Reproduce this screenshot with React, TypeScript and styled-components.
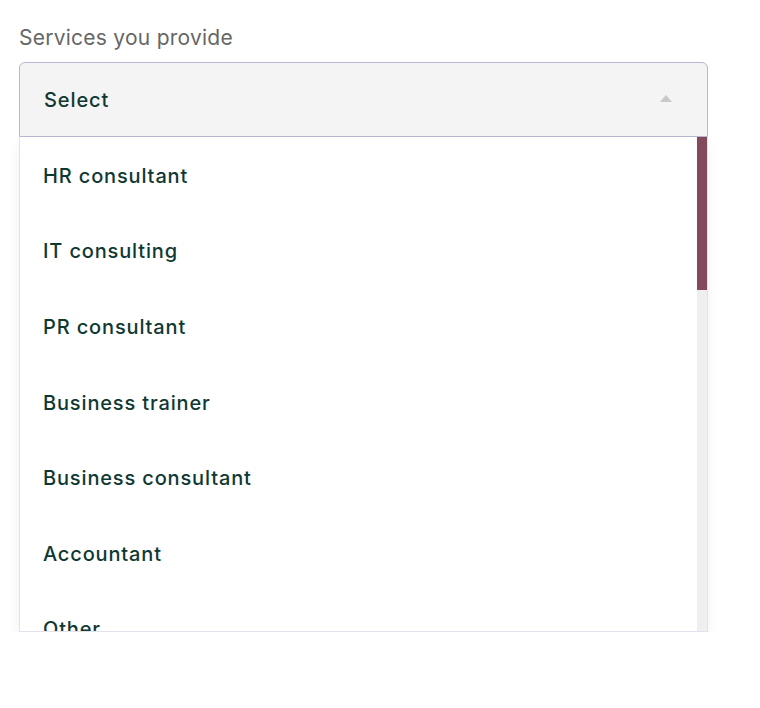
import React from "react";
import styled, { createGlobalStyle } from "styled-components";

const Global = createGlobalStyle`
  html, body { margin: 0; padding: 0; background: #ffffff; }
  body { font-family: Inter, "Noto Sans", "Liberation Sans", sans-serif; }
`;

const Page = styled.div`
  padding: 24px 0 0 19px;
  width: 689px;
`;

const Label = styled.div`
  font-size: 21px;
  line-height: 27px;
  color: #666666;
  font-weight: 400;
  letter-spacing: 0.25px;
  margin-bottom: 11px;
`;

const Field = styled.div`
  display: flex;
  flex-direction: column;
`;

const Trigger = styled.div`
  box-sizing: border-box;
  height: 75px;
  display: flex;
  align-items: center;
  justify-content: space-between;
  padding: 0 35px 0 24px;
  background: #f4f4f4;
  border: 1px solid #b9b7d1;
  border-radius: 6px 6px 0 0;
  font-size: 20px;
  font-weight: 500;
  letter-spacing: 0.9px;
  color: #0f3833;
`;

const Caret = styled.span`
  width: 0;
  height: 0;
  border-left: 6.5px solid transparent;
  border-right: 6.5px solid transparent;
  border-bottom: 7px solid #c9c9c9;
  margin-top: -2px;
`;

const Menu = styled.div`
  box-sizing: border-box;
  height: 495px;
  display: flex;
  border: 1px solid #e2e1ec;
  border-top: none;
  background: #ffffff;
  box-shadow: 0 6px 12px rgba(40, 40, 80, 0.06);
`;

const Options = styled.ul`
  flex: 1;
  margin: 0;
  padding: 0;
  list-style: none;
  overflow: hidden;
`;

const Option = styled.li`
  box-sizing: border-box;
  height: 75.6px;
  display: flex;
  align-items: center;
  padding: 2px 23px 0;
  font-size: 20px;
  font-weight: 500;
  letter-spacing: 0.85px;
  color: #0f3833;
`;

const Track = styled.div`
  width: 10px;
  background: #efefef;
  display: flex;
  flex-direction: column;
`;

const Thumb = styled.div`
  background: #834a5e;
`;

const items = [
  "HR consultant",
  "IT consulting",
  "PR consultant",
  "Business trainer",
  "Business consultant",
  "Accountant",
  "Other",
];

export default function App() {
  return (
    <>
      <Global />
      <Page>
        <Label>Services you provide</Label>
        <Field>
          <Trigger>
            <span>Select</span>
            <Caret />
          </Trigger>
          <Menu>
            <Options>
              {items.map((t) => (
                <Option key={t}>{t}</Option>
              ))}
            </Options>
            <Track>
              <Thumb style={{ height: 153 }} />
            </Track>
          </Menu>
        </Field>
      </Page>
    </>
  );
}
